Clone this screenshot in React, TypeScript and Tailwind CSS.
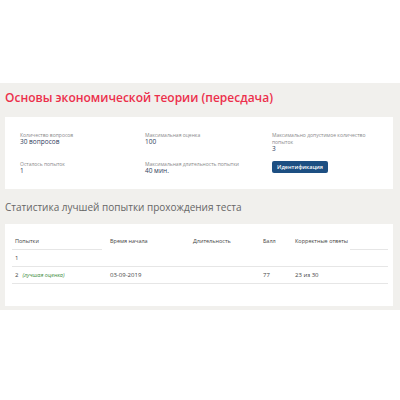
import React from 'react'

const Info = ({label, value}: {label: string; value: string}) => (
  <div className="flex flex-col">
    <span className="text-[5px] leading-[6px] text-[#8a8a8a]">{label}</span>
    <span className="text-[6.5px] leading-[8px] text-[#2f3d5a]">{value}</span>
  </div>
)

const rows = [
  {n: '1', best: false, start: '', dur: '', score: '', correct: ''},
  {n: '2', best: true, start: '03-09-2019', dur: '', score: '77', correct: '23 из 30'},
]

const App = () => {
  return (
    <div className="w-[400px] h-[400px] bg-white" style={{fontFamily: '"Open Sans", "Liberation Sans", sans-serif'}}>
      <div className="h-[83px]" />
      <div className="bg-[#f1f0ed] pl-[5px] pr-[7px] pt-[7px] pb-[4px]">
        <h1 className="text-[12px] leading-[16px] font-semibold text-[#ec2f4b]">
          Основы экономической теории (пересдача)
        </h1>

        <div className="bg-white mt-[11px] pl-[15px] pt-[15px] pb-[14px]">
          <div className="grid grid-cols-[125px_127px_1fr] gap-y-[8px]">
            <Info label="Количество вопросов" value="30 вопросов" />
            <Info label="Максимальная оценка" value="100" />
            <div className="flex flex-col w-[95px]">
              <span className="text-[5px] leading-[6.5px] text-[#8a8a8a]">Максимально допустимое количество попыток</span>
              <span className="text-[6.5px] leading-[8px] text-[#2f3d5a]">3</span>
            </div>
            <Info label="Осталось попыток" value="1" />
            <Info label="Максимальная длительность попытки" value="40 мин." />
            <div className="flex">
              <button className="bg-[#1d4f82] text-white text-[5.5px] leading-[12px] h-[12px] w-[56px] rounded-[2px] font-semibold">
                Идентификация
              </button>
            </div>
          </div>
        </div>

        <h2 className="mt-[11px] text-[10px] leading-[14px] text-[#666666]">
          Статистика лучшей попытки прохождения теста
        </h2>

        <div className="bg-white mt-[10px] pl-[7px] pr-[5px] pt-[9px] pb-[22px]">
          <div className="grid grid-cols-[95px_83px_70px_32px_58px_1fr] text-[5.5px] text-[#444444] whitespace-nowrap">
            <div className="h-[17px] flex items-center pl-[3px] mr-[5px] border-b border-[#e6e6e6]">Попытки</div>
            <div className="h-[17px] flex items-center pl-[3px]">Время начала</div>
            <div className="h-[17px] flex items-center pl-[3px]">Длительность</div>
            <div className="h-[17px] flex items-center pl-[3px]">Балл</div>
            <div className="h-[17px] flex items-center pl-[3px]">Корректные ответы</div>
            <div className="h-[17px] border-b border-[#e6e6e6]" />
          </div>
          {rows.map((r) => (
            <div key={r.n} className="grid grid-cols-[95px_83px_70px_32px_58px_1fr] h-[17px] items-center text-[6px] text-[#444444] border-b border-[#e6e6e6]">
              <div className="pl-[3px]">
                {r.n}
                {r.best && <span className="ml-[4px] italic text-[5.5px] text-[#3c8d3c]">(лучшая оценка)</span>}
              </div>
              <div className="pl-[3px]">{r.start}</div>
              <div className="pl-[3px]">{r.dur}</div>
              <div className="pl-[3px]">{r.score}</div>
              <div className="pl-[3px]">{r.correct}</div>
              <div />
            </div>
          ))}
        </div>
      </div>
    </div>
  )
}

export default App
